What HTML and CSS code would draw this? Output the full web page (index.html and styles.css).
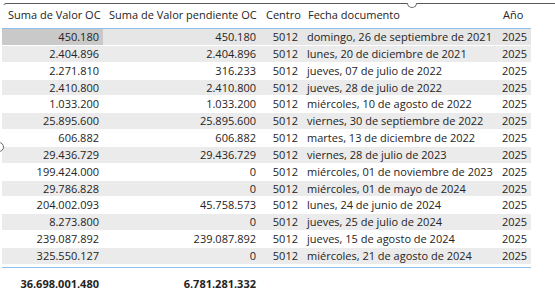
FILE: index.html
```html
<!DOCTYPE html>
<html lang="es">
<head>
<meta charset="utf-8">
<link rel="stylesheet" href="styles.css">
</head>
<body>
<div class="frame">
  <div class="frame-top"></div>
  <div class="handle-top"></div>
  <div class="handle-left"></div>
  <div class="table">
    <div class="row head">
      <div class="c c1">Suma de Valor OC</div>
      <div class="c c2">Suma de Valor pendiente OC</div>
      <div class="c c3">Centro</div>
      <div class="c c4">Fecha documento</div>
      <div class="c c5">Año</div>
    </div>
    <div class="body">
      <div class="row alt hover"><div class="c c1 num sel">450.180</div><div class="c c2 num">450.180</div><div class="c c3 num">5012</div><div class="c c4">domingo, 26 de septiembre de 2021</div><div class="c c5 num">2025</div></div>
      <div class="row alt"><div class="c c1 num">2.404.896</div><div class="c c2 num">2.404.896</div><div class="c c3 num">5012</div><div class="c c4">lunes, 20 de diciembre de 2021</div><div class="c c5 num">2025</div></div>
      <div class="row"><div class="c c1 num">2.271.810</div><div class="c c2 num">316.233</div><div class="c c3 num">5012</div><div class="c c4">jueves, 07 de julio de 2022</div><div class="c c5 num">2025</div></div>
      <div class="row alt"><div class="c c1 num">2.410.800</div><div class="c c2 num">2.410.800</div><div class="c c3 num">5012</div><div class="c c4">jueves, 28 de julio de 2022</div><div class="c c5 num">2025</div></div>
      <div class="row"><div class="c c1 num">1.033.200</div><div class="c c2 num">1.033.200</div><div class="c c3 num">5012</div><div class="c c4">miércoles, 10 de agosto de 2022</div><div class="c c5 num">2025</div></div>
      <div class="row alt"><div class="c c1 num">25.895.600</div><div class="c c2 num">25.895.600</div><div class="c c3 num">5012</div><div class="c c4">viernes, 30 de septiembre de 2022</div><div class="c c5 num">2025</div></div>
      <div class="row"><div class="c c1 num">606.882</div><div class="c c2 num">606.882</div><div class="c c3 num">5012</div><div class="c c4">martes, 13 de diciembre de 2022</div><div class="c c5 num">2025</div></div>
      <div class="row alt"><div class="c c1 num">29.436.729</div><div class="c c2 num">29.436.729</div><div class="c c3 num">5012</div><div class="c c4">viernes, 28 de julio de 2023</div><div class="c c5 num">2025</div></div>
      <div class="row"><div class="c c1 num">199.424.000</div><div class="c c2 num">0</div><div class="c c3 num">5012</div><div class="c c4">miércoles, 01 de noviembre de 2023</div><div class="c c5 num">2025</div></div>
      <div class="row alt"><div class="c c1 num">29.786.828</div><div class="c c2 num">0</div><div class="c c3 num">5012</div><div class="c c4">miércoles, 01 de mayo de 2024</div><div class="c c5 num">2025</div></div>
      <div class="row"><div class="c c1 num">204.002.093</div><div class="c c2 num">45.758.573</div><div class="c c3 num">5012</div><div class="c c4">lunes, 24 de junio de 2024</div><div class="c c5 num">2025</div></div>
      <div class="row alt"><div class="c c1 num">8.273.800</div><div class="c c2 num">0</div><div class="c c3 num">5012</div><div class="c c4">jueves, 25 de julio de 2024</div><div class="c c5 num">2025</div></div>
      <div class="row"><div class="c c1 num">239.087.892</div><div class="c c2 num">239.087.892</div><div class="c c3 num">5012</div><div class="c c4">jueves, 15 de agosto de 2024</div><div class="c c5 num">2025</div></div>
      <div class="row alt"><div class="c c1 num">325.550.127</div><div class="c c2 num">0</div><div class="c c3 num">5012</div><div class="c c4">miércoles, 21 de agosto de 2024</div><div class="c c5 num">2025</div></div>
    </div>
    <div class="row total">
      <div class="c c1 num">36.698.001.480</div>
      <div class="c c2 num">6.781.281.332</div>
      <div class="c c3"></div>
      <div class="c c4"></div>
      <div class="c c5"></div>
    </div>
  </div>
</div>
</body>
</html>
```

FILE: styles.css
```css
html, body {
  margin: 0;
  padding: 0;
  background: #ffffff;
  overflow: hidden;
}
body {
  font-family: "Open Sans", "Noto Sans", sans-serif;
  font-size: 11px;
  color: #252423;
}
.frame {
  position: relative;
  width: 555px;
  height: 288px;
}
.frame-top {
  position: absolute;
  left: 2px;
  top: 3px;
  right: 0;
  height: 6px;
  border-top: 1px solid #5a5a5a;
  border-left: 1px solid transparent;
  border-top-left-radius: 5px;
}
.handle-top {
  position: absolute;
  left: 407px;
  top: 3px;
  width: 10px;
  height: 5px;
  border: 1px solid #6a6a6a;
  border-top: none;
  border-radius: 0 0 6px 6px;
  background: #ffffff;
  box-sizing: border-box;
}
.handle-left {
  position: absolute;
  left: -6px;
  top: 142px;
  width: 10px;
  height: 10px;
  border: 1px solid #6a6a6a;
  border-radius: 50%;
  background: #ffffff;
  box-sizing: border-box;
}
.table {
  padding-top: 4px;
  padding-left: 2px;
  width: 529px;
}
.row {
  display: grid;
  grid-template-columns: 101px 157px 42px 195px 34px;
  height: 16.85px;
  line-height: 16px;
  box-sizing: border-box;
  border-bottom: 1px solid #ffffff;
}
.row.alt {
  background: #ebebeb;
}
.row.hover {
  background: #e6e6e6;
}
.c {
  white-space: nowrap;
  overflow: hidden;
  padding: 0 4px 0 5px;
}
.num {
  text-align: right;
}
.sel {
  background: #c9c9c9;
}
.head {
  height: 25px;
  border-bottom: 1px solid #8fbfea;
  padding-top: 2px;
  line-height: 18px;
}
.head .c {
  padding-left: 6px;
}
.body {
  border-bottom: 1px solid #8fbfea;
  padding-bottom: 2px;
}
.total {
  padding-top: 8px;
  height: 30px;
  font-weight: bold;
  border-bottom: none;
}
```
